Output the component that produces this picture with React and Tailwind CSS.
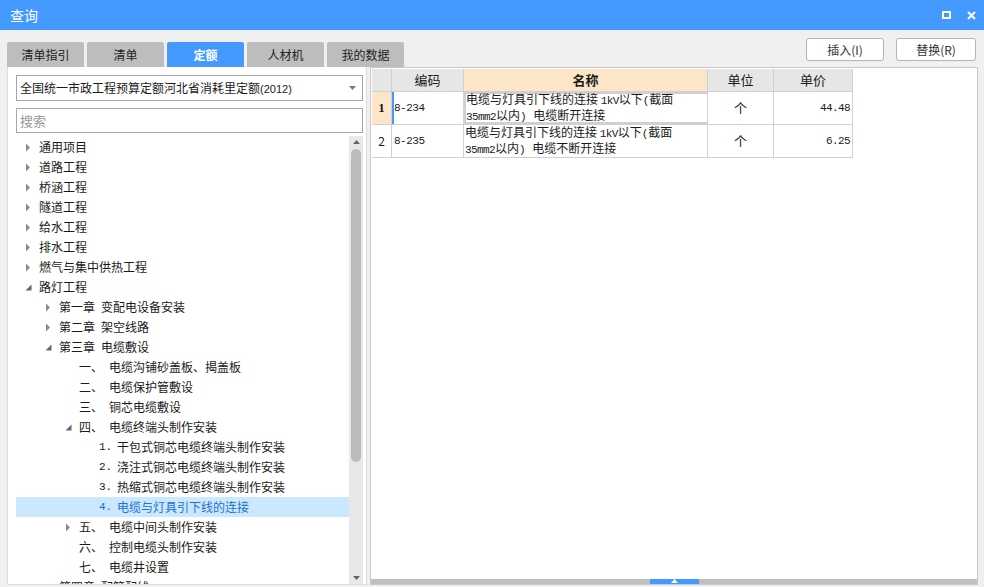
import React from 'react';

const Collapsed = () => (
  <svg width="6" height="9" viewBox="0 0 6 9"><path d="M1 0.5 L5 4.5 L1 8.5 Z" fill="#8a8a8a" /></svg>
);
const Expanded = () => (
  <svg width="7" height="7" viewBox="0 0 7 7"><path d="M6.5 0.5 L6.5 6.5 L0.5 6.5 Z" fill="#666" /></svg>
);

const tree = [
  { l: 0, a: 'c', t: '通用项目' },
  { l: 0, a: 'c', t: '道路工程' },
  { l: 0, a: 'c', t: '桥涵工程' },
  { l: 0, a: 'c', t: '隧道工程' },
  { l: 0, a: 'c', t: '给水工程' },
  { l: 0, a: 'c', t: '排水工程' },
  { l: 0, a: 'c', t: '燃气与集中供热工程' },
  { l: 0, a: 'e', t: '路灯工程' },
  { l: 1, a: 'c', h: '第一章', t: '变配电设备安装' },
  { l: 1, a: 'c', h: '第二章', t: '架空线路' },
  { l: 1, a: 'e', h: '第三章', t: '电缆敷设' },
  { l: 2, n: '一、', t: '电缆沟铺砂盖板、揭盖板' },
  { l: 2, n: '二、', t: '电缆保护管敷设' },
  { l: 2, n: '三、', t: '铜芯电缆敷设' },
  { l: 2, a: 'e', n: '四、', t: '电缆终端头制作安装' },
  { l: 3, d: '1.', t: '干包式铜芯电缆终端头制作安装' },
  { l: 3, d: '2.', t: '浇注式铜芯电缆终端头制作安装' },
  { l: 3, d: '3.', t: '热缩式铜芯电缆终端头制作安装' },
  { l: 3, d: '4.', t: '电缆与灯具引下线的连接', sel: true },
  { l: 2, a: 'c', n: '五、', t: '电缆中间头制作安装' },
  { l: 2, n: '六、', t: '控制电缆头制作安装' },
  { l: 2, n: '七、', t: '电缆井设置' },
  { l: 1, h: '第四章', t: '配管配线' },
];

const indents = ['pl-[3px]', 'pl-[23px]', 'pl-[43px]', 'pl-[63px]'];

function TreeRow({ r }) {
  return (
    <div className={`flex items-center h-[20px] shrink-0 ${indents[r.l]} ${r.sel ? 'bg-[#cce8ff] text-[#1a73d9]' : 'text-[#1a1a1a]'}`}>
      <div className="w-[20px] pl-[6px] flex items-center">
        {r.a === 'c' && <Collapsed />}
        {r.a === 'e' && <Expanded />}
      </div>
      {r.h && <span className="mr-[6px]">{r.h}</span>}
      {r.n && <span className="w-[30px]">{r.n}</span>}
      {r.d && <span className="w-[18px] font-['Liberation_Mono'] text-[11px]">{r.d}</span>}
      <span className="whitespace-nowrap">{r.t}</span>
    </div>
  );
}

const mono = "font-['Liberation_Mono','Noto_Sans_CJK_SC',monospace]";

export default function App() {
  return (
    <div className="w-[984px] h-[587px] bg-[#f0f0f0] overflow-hidden flex flex-col font-['Noto_Sans_CJK_SC',sans-serif] text-[12px] text-[#1a1a1a]">
      {/* title */}
      <div className="h-[30px] bg-[#4499ff] flex items-center justify-between pl-[10px] pr-[8px] shrink-0">
        <span className="text-white text-[14px]">查询</span>
        <div className="flex items-center gap-[16px]">
          <div className="w-[9px] h-[8px] border-2 border-white" />
          <svg width="9" height="9" viewBox="0 0 9 9"><path d="M1 1 L8 8 M8 1 L1 8" stroke="white" strokeWidth="2" /></svg>
        </div>
      </div>

      {/* tabs + buttons */}
      <div className="h-[37px] flex justify-between shrink-0 pl-[7px] pr-[8px]">
        <div className="flex items-end gap-[3px]">
          {['清单指引', '清单', '定额', '人材机', '我的数据'].map((t) => (
            <div
              key={t}
              className={`w-[77px] h-[25px] rounded-t-[2px] flex items-center justify-center text-[12px] ${t === '定额' ? 'bg-[#4499ff] text-white font-bold' : 'bg-[#bdbdbd] text-[#222]'}`}
            >
              {t}
            </div>
          ))}
        </div>
        <div className="flex gap-[12px] pt-[8px]">
          <button className="w-[78px] h-[23px] bg-white border border-[#b4b4b4] rounded-[3px] text-[12px] text-[#333]">插入(I)</button>
          <button className="w-[80px] h-[23px] bg-white border border-[#b4b4b4] rounded-[3px] text-[12px] text-[#333]">替换(R)</button>
        </div>
      </div>

      {/* main */}
      <div className="flex-1 flex pl-[7px] pr-[6px] pb-[2px] gap-[3px] min-h-0">
        {/* left */}
        <div className="w-[360px] bg-white border border-[#dcdcdc] border-t-0 flex flex-col pl-[8px] pr-[3px] pt-[8px]">
          <div className="w-[347px] h-[26px] border border-[#a6a6a6] flex items-center justify-between pl-[3px] pr-[6px]">
            <span className="whitespace-nowrap">全国统一市政工程预算定额河北省消耗里定额<span className="font-['Liberation_Sans'] text-[11px]">(2012)</span></span>
            <svg width="7" height="4" viewBox="0 0 7 4"><path d="M0 0 L7 0 L3.5 4 Z" fill="#777" /></svg>
          </div>
          <div className="w-[347px] h-[25px] border border-[#a6a6a6] mt-[7px] flex items-center pl-[3px] text-[#999] text-[13px]">搜索</div>
          <div className="flex-1 flex min-h-0 mt-[3px]">
            <div className="w-[334px] flex flex-col overflow-hidden text-[12px] pt-[1px]">
              {tree.map((r, i) => (
                <TreeRow key={i} r={r} />
              ))}
            </div>
            <div className="w-[14px] bg-[#e8e8e8] flex flex-col items-center">
              <svg className="mt-[4px]" width="7" height="4" viewBox="0 0 7 4"><path d="M0 4 L7 4 L3.5 0 Z" fill="#666" /></svg>
              <div className="w-[10px] h-[313px] bg-[#bcbcbc] rounded-[5px] mt-[5px]" />
              <div className="flex-1" />
              <svg className="mb-[4px]" width="7" height="4" viewBox="0 0 7 4"><path d="M0 0 L7 0 L3.5 4 Z" fill="#666" /></svg>
            </div>
          </div>
        </div>

        {/* right */}
        <div className="flex-1 bg-white border border-[#c8c8c8] flex flex-col">
          <div className="w-[482px] pl-[1px] pt-[1px]">
            <div className="flex h-[23px] text-[13px] border-b border-[#d0d0d0]">
              <div className="w-[20px] bg-[#e6e6e6] border-r border-[#d0d0d0]" />
              <div className="w-[72px] bg-[#e6e6e6] border-r border-[#d0d0d0] flex items-center justify-center">编码</div>
              <div className="w-[244px] bg-[#fde6c8] border-r border-[#d0d0d0] flex items-center justify-center font-bold">名称</div>
              <div className="w-[66px] bg-[#e6e6e6] border-r border-[#d0d0d0] flex items-center justify-center">单位</div>
              <div className="w-[79px] bg-[#e6e6e6] border-r border-[#d0d0d0] flex items-center justify-center">单价</div>
            </div>
            {[
              { n: '1', c: '8-234', l2: '电缆断开连接', p: '44.48', sel: true },
              { n: '2', c: '8-235', l2: '电缆不断开连接', p: '6.25' },
            ].map((r) => (
              <div key={r.n} className="flex h-[33px] border-b border-[#d0d0d0]">
                <div className={`w-[20px] border-r border-[#d0d0d0] flex items-center justify-center ${r.sel ? "bg-[#fde6c8] font-bold font-['Liberation_Serif'] text-[13px]" : 'text-[12px]'}`}>{r.n}</div>
                <div className={`w-[72px] border-r border-[#d0d0d0] flex items-center ${mono} text-[11px] tracking-[-0.5px] ${r.sel ? 'border-l-2 border-l-[#4499ff]' : 'pl-[2px]'}`}>{r.c}</div>
                <div className={`w-[244px] border-r border-[#d0d0d0] flex flex-col justify-center leading-[14px] ${r.sel ? 'border-2 border-[#6e6e6e]' : 'pl-[1px]'}`}>
                  <span className="whitespace-nowrap">电缆与灯具引下线的连接 <span className={`${mono} text-[11px] tracking-[-0.6px]`}>1kV</span>以下<span className={`${mono} text-[11px]`}>(</span>截面</span>
                  <span className="whitespace-nowrap"><span className={`${mono} text-[11px] tracking-[-0.6px]`}>35mm2</span>以内<span className={`${mono} text-[11px] whitespace-pre`}>) </span>{r.l2}</span>
                </div>
                <div className="w-[66px] border-r border-[#d0d0d0] flex items-center justify-center text-[13px]">个</div>
                <div className={`w-[79px] border-r border-[#d0d0d0] flex items-center justify-end pr-[2px] ${mono} text-[11px] tracking-[-0.6px]`}>{r.p}</div>
              </div>
            ))}
          </div>
          <div className="flex-1" />
          <div className="h-[5px] bg-[#bfbfbf] flex justify-center">
            <div className="w-[49px] h-[5px] bg-[#4499ff] flex items-start justify-center">
              <svg width="7" height="4" viewBox="0 0 7 4"><path d="M0 4 L7 4 L3.5 0 Z" fill="white" /></svg>
            </div>
          </div>
        </div>
      </div>
    </div>
  );
}
